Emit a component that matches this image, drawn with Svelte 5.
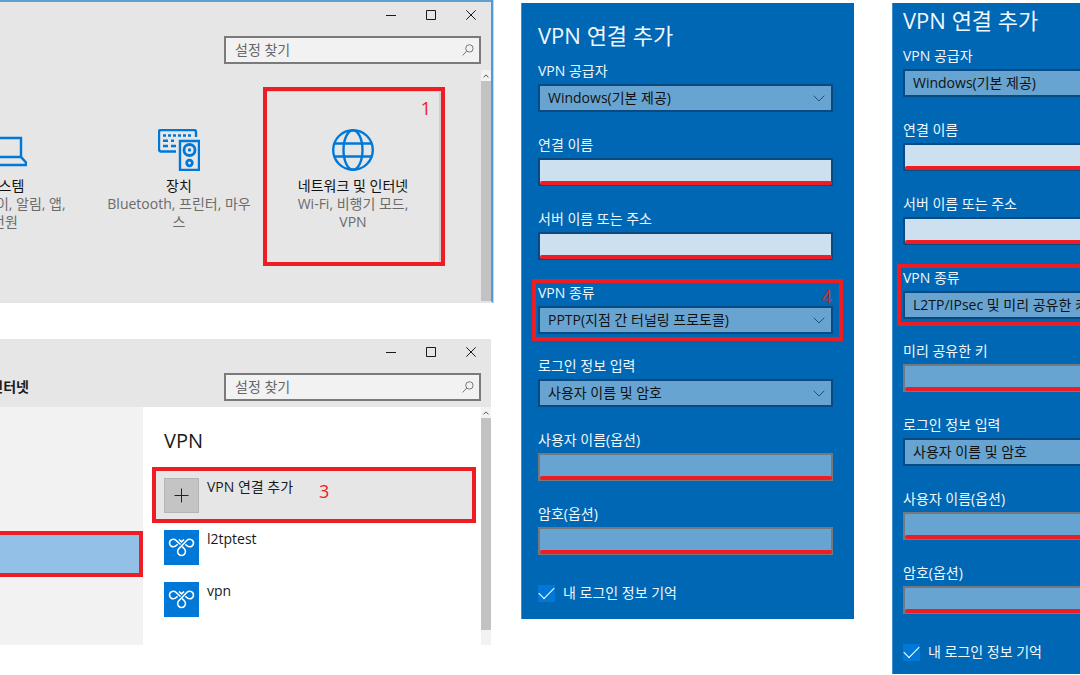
<script lang="ts">
  type Field = {
    label: string;
    kind: 'select' | 'text' | 'password';
    value?: string;
    tone?: 'bright' | 'muted';
    step?: string;
    marked?: boolean;
  };

  const tiles = [
    { icon: 'system', name: '시스템', lines: ['디스플레이, 알림, 앱,', '전원'] },
    { icon: 'devices', name: '장치', lines: ['Bluetooth, 프린터, 마우', '스'] },
    { icon: 'network', name: '네트워크 및 인터넷', lines: ['Wi-Fi, 비행기 모드,', 'VPN'], step: '1' }
  ];

  const connections = ['l2tptest', 'vpn'];

  const provider: Field = { label: 'VPN 공급자', kind: 'select', value: 'Windows(기본 제공)' };
  const name: Field = { label: '연결 이름', kind: 'text', tone: 'bright' };
  const server: Field = { label: '서버 이름 또는 주소', kind: 'text', tone: 'bright' };
  const login: Field = { label: '로그인 정보 입력', kind: 'select', value: '사용자 이름 및 암호' };
  const user: Field = { label: '사용자 이름(옵션)', kind: 'text', tone: 'muted' };
  const password: Field = { label: '암호(옵션)', kind: 'password', tone: 'muted' };

  const dialogs: { id: string; fields: Field[] }[] = [
    {
      id: 'pptp',
      fields: [
        provider,
        name,
        server,
        { label: 'VPN 종류', kind: 'select', value: 'PPTP(지점 간 터널링 프로토콜)', marked: true, step: '4' },
        login,
        user,
        password
      ]
    },
    {
      id: 'l2tp',
      fields: [
        provider,
        name,
        server,
        { label: 'VPN 종류', kind: 'select', value: 'L2TP/IPsec 및 미리 공유한 키', marked: true },
        { label: '미리 공유한 키', kind: 'password', tone: 'muted' },
        login,
        user,
        password
      ]
    }
  ];

  let remember = $state([true, true]);
</script>

{#snippet windowHead(id: string, title: string)}
  <header class="window-head">
    <div class="controls">
      <button type="button" aria-label="최소화">
        <svg width="10" height="10" viewBox="0 0 10 10"><path d="M0 5.5h10" /></svg>
      </button>
      <button type="button" aria-label="최대화">
        <svg width="10" height="10" viewBox="0 0 10 10"><path d="M.5.5h9v9h-9z" /></svg>
      </button>
      <button type="button" aria-label="닫기">
        <svg width="10" height="10" viewBox="0 0 10 10"><path d="M.3.3l9.4 9.4M9.7.3L.3 9.7" /></svg>
      </button>
    </div>
    <div class="head-row">
      <h2 class="head-title">{title}</h2>
      <div class="search">
        <input id="{id}-search" type="text" placeholder="설정 찾기" aria-label="설정 찾기" />
        <svg width="12" height="12" viewBox="0 0 12 12">
          <circle cx="7.4" cy="4.4" r="3.7" />
          <path d="M4.8 7L.6 11.4" />
        </svg>
      </div>
    </div>
  </header>
{/snippet}

{#snippet scrollbar()}
  <div class="scrollbar">
    <div class="scroll-up">
      <svg width="6" height="4" viewBox="0 0 6 4"><path d="M.5 3.4L3 .9l2.5 2.5" /></svg>
    </div>
    <div class="scroll-thumb"></div>
  </div>
{/snippet}

{#snippet tileIcon(icon: string)}
  {#if icon === 'system'}
    <svg width="44" height="42" viewBox="0 0 44 42">
      <path d="M6 28V9h32v19M6 28h32l5 5.5V36H1v-2.5z" />
    </svg>
  {:else if icon === 'devices'}
    <svg width="42" height="42" viewBox="0 0 42 42">
      <path d="M18 22.500H3a2 2 0 0 1-2-2V3a2 2 0 0 1 2-2h33a2 2 0 0 1 2 2v5" />
      <path d="M5 6.500h30" stroke-dasharray="3 2" stroke-width="2.500" />
      <path d="M5 11.700h5M13 11.700h3M5 17h5M13 17h5" stroke-width="2.500" />
      <path d="M22 12h19v29H22z" />
      <circle cx="31.500" cy="21" r="5.500" stroke-width="2.800" />
      <circle cx="31.500" cy="21" r="1.700" class="dot" />
      <circle cx="31.500" cy="34" r="2.800" stroke-width="2.800" />
    </svg>
  {:else}
    <svg width="42" height="42" viewBox="0 0 42 42">
      <circle cx="21" cy="21" r="19.800" />
      <ellipse cx="21" cy="21" rx="9.500" ry="19.800" />
      <path d="M2.500 14.500h37M2.500 27.500h37" />
    </svg>
  {/if}
{/snippet}

<main class="board">
  <div class="windows">
    <section class="window framed">
      {@render windowHead('home', '')}
      <div class="window-body">
        <div class="tiles">
          {#each tiles as tile (tile.name)}
            <button type="button" class="tile">
              {@render tileIcon(tile.icon)}
              <span class="tile-name">{tile.name}</span>
              {#each tile.lines as line}
                <span class="tile-line">{line}</span>
              {/each}
              {#if tile.step}
                <span class="ring tile-ring"></span>
                <span class="step tile-step">{tile.step}</span>
              {/if}
            </button>
          {/each}
        </div>
        {@render scrollbar()}
      </div>
    </section>

    <section class="window">
      {@render windowHead('network', '네트워크 및 인터넷')}
      <div class="window-body">
        <nav class="sidebar">
          <a class="selected" href="#vpn" aria-label="VPN"></a>
        </nav>
        <div class="content">
          <h1>VPN</h1>
          <ul class="connections">
            <li>
              <button type="button" class="connection add">
                <span class="badge plus">
                  <svg width="35" height="35" viewBox="0 0 35 35"><path d="M17.500 10.500v14M10.500 17.500h14" /></svg>
                </span>
                <span class="connection-name">VPN 연결 추가</span>
                <span class="step">3</span>
                <span class="ring add-ring"></span>
              </button>
            </li>
            {#each connections as connection (connection)}
              <li>
                <button type="button" class="connection">
                  <span class="badge">
                    <svg width="35" height="35" viewBox="0 0 35 35">
                      <path d="M16.500 14.500L12 10.300a3.800 3.800 0 1 0 .2 5.200l1.500-1.200" />
                      <path d="M21.300 14.300l1.500 1.200a3.800 3.800 0 1 0 .2-5.200L14.800 18.800a3.900 3.900 0 1 0 5.500 0l-2-2.200" />
                      <path d="M15 9.500l2.500 2.300L20 9.500" />
                    </svg>
                  </span>
                  <span class="connection-name">{connection}</span>
                </button>
              </li>
            {/each}
          </ul>
        </div>
        {@render scrollbar()}
      </div>
    </section>
  </div>

  {#each dialogs as dialog, i (dialog.id)}
    <div class="column {dialog.id}">
      <form class="dialog">
        <h1>VPN 연결 추가</h1>
        {#each dialog.fields as field, n (field.label)}
          {@const id = `${dialog.id}-${n}`}
          <div class="field" class:marked={field.marked}>
            <label for={id}>{field.label}</label>
            <div class="control">
              {#if field.kind === 'select'}
                <select {id}>
                  <option>{field.value}</option>
                </select>
                <svg class="chevron" width="12" height="7" viewBox="0 0 12 7"><path d="M.7.7L6 6 11.300.7" /></svg>
              {:else}
                <input {id} type={field.kind} class={field.tone} autocomplete="off" />
                <span class="underline"></span>
              {/if}
            </div>
            {#if field.marked}
              <span class="ring field-ring"></span>
            {/if}
            {#if field.step}
              <span class="step field-step">{field.step}</span>
            {/if}
          </div>
        {/each}
        <label class="remember">
          <input type="checkbox" bind:checked={remember[i]} />
          <span>내 로그인 정보 기억</span>
        </label>
      </form>
    </div>
  {/each}
</main>

<style>
  :global(body) {
    background: #fff;
    overflow-x: hidden;
  }

  .board {
    display: grid;
    grid-template-columns: minmax(0, 495fr) minmax(0, 333fr) minmax(0, 200fr);
    align-items: start;
    column-gap: 26px;
    font-family: 'Open Sans', 'Noto Sans CJK KR', sans-serif;
    font-size: 14px;
    line-height: 18px;
    color: #1a1a1a;
  }
  .board * { box-sizing: border-box; }

  button,
  input,
  select {
    margin: 0;
    padding: 0;
    border: none;
    border-radius: 0;
    background: none;
    font: inherit;
    color: inherit;
    outline: none;
  }
  button { cursor: pointer; }
  h1,
  h2 {
    margin: 0;
    font-weight: 400;
  }
  svg {
    display: block;
    flex-shrink: 0;
    fill: none;
    stroke: currentColor;
  }

  .ring {
    position: absolute;
    border: 4px solid #ee1c25;
    pointer-events: none;
  }
  .step {
    color: #ee1c25;
    font-size: 18px;
    line-height: 20px;
  }

  /* settings windows */
  .windows {
    display: flex;
    flex-direction: column;
    gap: 36px;
  }
  .window {
    margin-right: 4px;
    background: #fff;
  }
  .window.framed {
    margin-right: 2px;
    border-top: 2px solid #5f9fd0;
    border-right: 2px solid #4f9bd9;
    border-bottom: 2px solid #e4e4e4;
    box-shadow: 1px 0 0 #d4d4d4;
  }
  .window-head {
    padding-bottom: 6px;
    padding-right: 10px;
    background: #e6e6e6;
  }
  .controls {
    display: flex;
    justify-content: flex-end;
    height: 26px;
  }
  .controls button {
    display: grid;
    place-items: center;
    width: 40px;
  }
  .controls button:last-child {
    width: 20px;
    margin-left: 10px;
  }
  .head-row {
    display: flex;
    align-items: center;
    justify-content: space-between;
    margin-top: 8px;
  }
  .head-title {
    display: flex;
    justify-content: flex-end;
    width: 29px;
    overflow: hidden;
    font-size: 14px;
    font-weight: 700;
    white-space: nowrap;
  }
  .search {
    display: flex;
    align-items: center;
    width: 257px;
    height: 28px;
    padding: 0 5px 0 9px;
    border: 2px solid #7a7a7a;
    background: #f2f2f2;
    color: #767676;
  }
  .search input {
    flex: 1;
    min-width: 0;
  }
  .search input::placeholder {
    color: #666;
    opacity: 1;
  }

  .window-body { display: flex; }

  .scrollbar {
    display: flex;
    flex-direction: column;
    flex-shrink: 0;
    width: 10px;
    padding-bottom: 15px;
    background: #f2f2f2;
  }
  .framed .scrollbar { padding-bottom: 0; }
  .scroll-up {
    display: grid;
    place-items: center;
    height: 11px;
    color: #555;
  }
  .scroll-thumb {
    flex: 1;
    background: #c2c2c2;
  }

  .tiles {
    display: flex;
    flex: 1;
    justify-content: flex-end;
    min-width: 0;
    padding: 19px 41px 37px 0;
    overflow: hidden;
    background: #e6e6e6;
  }
  .tile {
    position: relative;
    display: flex;
    flex-direction: column;
    flex-shrink: 0;
    align-items: center;
    width: 174px;
    padding: 40px 0 33px;
    color: #6b6b6b;
    white-space: nowrap;
  }
  .tile svg {
    margin-bottom: 6px;
    stroke: #0078d7;
    stroke-width: 2.400;
  }
  .tile .dot {
    fill: #0078d7;
    stroke: none;
  }
  .tile-name { color: #111; }
  .tile-ring {
    inset: -2px -5px -2px -3px;
    box-shadow: inset -2px 1px 0 #cfcfcf;
  }
  .tile-step {
    position: absolute;
    top: 9px;
    right: 9px;
  }

  .sidebar {
    width: 143px;
    flex-shrink: 0;
    padding-top: 124px;
    background: #f2f2f2;
  }
  .selected {
    display: block;
    height: 46px;
    border: 4px solid #ee1c25;
    border-left: none;
    background: #92c0e7;
  }
  .content {
    flex: 1;
    min-width: 0;
    padding: 21px 7px 20px 11px;
  }
  .content h1 {
    margin: 0 10px 15px;
    font-size: 20px;
    line-height: 26px;
  }
  .connections {
    margin: 0;
    padding: 0;
    list-style: none;
  }
  .connection {
    position: relative;
    display: flex;
    align-items: flex-start;
    gap: 8px;
    width: 100%;
    height: 52px;
    padding: 9px 10px 0;
    text-align: left;
  }
  .connection.add { background: #e6e6e6; }
  .connection .step {
    margin-top: 3px;
    margin-left: 18px;
  }
  .add-ring { inset: -2px; }
  .badge {
    background: #0078d7;
    color: #fff;
  }
  .badge svg { stroke-width: 1.600; }
  .badge.plus {
    background: #c4c4c4;
    box-shadow: inset 0 0 0 1px #b4b4b4;
    color: #222;
  }
  .badge.plus svg { stroke-width: 1; }

  /* add-connection dialogs */
  .column {
    padding-top: 3px;
    overflow: hidden;
  }
  .column.l2tp { margin-left: 12px; }
  .dialog {
    padding: 17px 21px 16px 16px;
    border-left: 1px solid #3f8fcc;
    background: #0067b4;
    color: #f0f7fc;
  }
  .l2tp .dialog {
    width: 333px;
    padding: 2px 27px 12px 10px;
  }
  .dialog h1 {
    margin-bottom: 11px;
    font-size: 22px;
    line-height: 30px;
  }
  .field {
    position: relative;
    margin-bottom: 23px;
  }
  .field.marked { margin-bottom: 22px; }
  .field label {
    display: block;
    margin-bottom: 3px;
    line-height: 20px;
  }
  .control {
    position: relative;
    height: 28px;
  }
  .control select,
  .control input {
    display: block;
    width: 100%;
    height: 100%;
    border: 2px solid #0a4a80;
    background: #67a4d2;
    color: #111;
  }
  .control select {
    appearance: none;
    padding: 0 26px 0 8px;
  }
  .control input { padding: 0 8px; }
  .control .bright { background: #cce0f0; }
  .control .muted { border-color: #75797d; }
  .chevron {
    position: absolute;
    top: 11px;
    right: 8px;
    color: #23506f;
    pointer-events: none;
  }
  .underline {
    position: absolute;
    right: 1px;
    bottom: 1px;
    left: 2px;
    height: 4px;
    border-radius: 2px;
    background: #ee1c25;
    pointer-events: none;
  }
  .field-ring { inset: -4px -10px -7px -6px; }
  .field-step {
    position: absolute;
    top: 3px;
    right: 1px;
  }
  .remember {
    display: flex;
    align-items: center;
    gap: 8px;
    margin-top: 28px;
    line-height: 20px;
  }
  .remember input {
    display: grid;
    place-items: center;
    width: 17px;
    height: 17px;
    appearance: none;
    background: #0078d7;
  }
  .remember input:checked::before {
    content: '';
    width: 14px;
    height: 7px;
    margin-bottom: 4px;
    border-bottom: 1px solid #fff;
    border-left: 1px solid #fff;
    transform: rotate(-45deg);
  }
</style>
